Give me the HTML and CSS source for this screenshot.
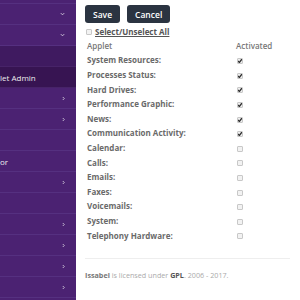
FILE: index.html
```html
<!DOCTYPE html>
<html lang="en">
<head>
  <meta charset="UTF-8">
  <title>Applet Admin</title>
  <meta name="viewport" content="width=device-width, initial-scale=1.0">
  <link rel="stylesheet" href="styles.css">
</head>
<body>
  <aside class="sidebar">
    <div class="nav-item top"></div>
    <div class="nav-item"><svg class="chev" viewBox="0 0 6 4"><polyline points="1,1 3,3 5,1"/></svg></div>
    <div class="nav-item"><svg class="chev" viewBox="0 0 6 4"><polyline points="1,1 3,3 5,1"/></svg></div>
    <div class="nav-item sub"></div>
    <div class="nav-item sub active"><span class="label">let Admin</span></div>
    <div class="nav-item"><svg class="chev right" viewBox="0 0 4 6"><polyline points="1,1 3,3 1,5"/></svg></div>
    <div class="nav-item"><svg class="chev right" viewBox="0 0 4 6"><polyline points="1,1 3,3 1,5"/></svg></div>
    <div class="nav-item"></div>
    <div class="nav-item"><span class="label">or</span></div>
    <div class="nav-item"><svg class="chev right" viewBox="0 0 4 6"><polyline points="1,1 3,3 1,5"/></svg></div>
    <div class="nav-item"></div>
    <div class="nav-item"><svg class="chev right" viewBox="0 0 4 6"><polyline points="1,1 3,3 1,5"/></svg></div>
    <div class="nav-item"><svg class="chev right" viewBox="0 0 4 6"><polyline points="1,1 3,3 1,5"/></svg></div>
    <div class="nav-item"><svg class="chev right" viewBox="0 0 4 6"><polyline points="1,1 3,3 1,5"/></svg></div>
    <div class="nav-item"><svg class="chev right" viewBox="0 0 4 6"><polyline points="1,1 3,3 1,5"/></svg></div>
  </aside>

  <main class="content">
    <div class="actions">
      <button type="button" class="btn">Save</button>
      <button type="button" class="btn">Cancel</button>
    </div>

    <label class="select-all"><input type="checkbox" class="box"><span>Select/Unselect All</span></label>

    <table class="applets">
      <thead>
        <tr><th>Applet</th><th>Activated</th></tr>
      </thead>
      <tbody>
        <tr><td>System Resources:</td><td><input type="checkbox" class="box" checked></td></tr>
        <tr><td>Processes Status:</td><td><input type="checkbox" class="box" checked></td></tr>
        <tr><td>Hard Drives:</td><td><input type="checkbox" class="box" checked></td></tr>
        <tr><td>Performance Graphic:</td><td><input type="checkbox" class="box" checked></td></tr>
        <tr><td>News:</td><td><input type="checkbox" class="box" checked></td></tr>
        <tr><td>Communication Activity:</td><td><input type="checkbox" class="box" checked></td></tr>
        <tr><td>Calendar:</td><td><input type="checkbox" class="box"></td></tr>
        <tr><td>Calls:</td><td><input type="checkbox" class="box"></td></tr>
        <tr><td>Emails:</td><td><input type="checkbox" class="box"></td></tr>
        <tr><td>Faxes:</td><td><input type="checkbox" class="box"></td></tr>
        <tr><td>Voicemails:</td><td><input type="checkbox" class="box"></td></tr>
        <tr><td>System:</td><td><input type="checkbox" class="box"></td></tr>
        <tr><td>Telephony Hardware:</td><td><input type="checkbox" class="box"></td></tr>
      </tbody>
    </table>

    <footer class="footer">
      <b>Issabel</b> is licensed under <b class="gpl">GPL</b>. 2006 - 2017.
    </footer>
  </main>
</body>
</html>
```

FILE: styles.css
```css
body {
  margin: 0;
  font-family: 'Open Sans', sans-serif;
  font-size: 8px;
  background: #fff;
  color: #666;
  display: flex;
  height: 300px;
  overflow: hidden;
}

.sidebar {
  width: 76px;
  flex-shrink: 0;
  background: #4b2272;
  overflow: hidden;
}

.nav-item {
  height: 20px;
  border-bottom: 1px solid #553080;
  display: flex;
  align-items: center;
  justify-content: flex-end;
  padding-right: 11px;
  color: #eee;
  white-space: nowrap;
}

.nav-item.top {
  height: 3px;
}

.nav-item .label {
  margin-right: auto;
}

.nav-item.sub {
  background: #3f1a60;
  border-bottom-color: #472368;
}

.nav-item.active {
  background: #371452;
}

.chev {
  width: 5px;
  height: 4px;
  fill: none;
  stroke: #cfc6da;
  stroke-width: 1.2;
}

.chev.right {
  width: 3px;
  height: 5px;
}

.content {
  flex: 1;
  padding: 5px 10px 0 9px;
}

.actions {
  display: flex;
  gap: 7px;
}

.btn {
  font-family: 'Open Sans', sans-serif;
  font-size: 8.5px;
  font-weight: 600;
  color: #fff;
  background: #2b3441;
  border: 0;
  border-radius: 3px;
  height: 18px;
  padding: 0 8px;
}

.box {
  appearance: none;
  -webkit-appearance: none;
  margin: 0;
  width: 6px;
  height: 6px;
  border: 1px solid #c8c8c8;
  border-radius: 1px;
  background: #f2f2f2;
  vertical-align: middle;
}

.box:checked {
  background: #eee url("data:image/svg+xml;utf8,<svg xmlns='http://www.w3.org/2000/svg' viewBox='0 0 6 6'><polyline points='1,3 2.4,4.5 5,1' fill='none' stroke='%23333' stroke-width='1.3'/></svg>") center/6px 6px no-repeat;
}

.select-all {
  display: flex;
  align-items: center;
  margin-top: 3px;
  height: 11px;
  font-weight: 700;
  color: #555;
}

.select-all .box {
  margin-left: 1px;
  margin-right: 3px;
}

.select-all span {
  text-decoration: underline;
}

.applets {
  border-collapse: collapse;
  width: 100%;
  margin-top: 1px;
}

.applets th,
.applets td {
  height: 14.6px;
  padding: 0 0 0 2px;
  text-align: left;
  font-weight: 700;
  color: #6a6a6a;
}

.applets th {
  font-weight: 600;
  color: #777;
}

.applets th:first-child,
.applets td:first-child {
  width: 147px;
}

.applets td:last-child {
  padding-left: 3px;
}

.footer {
  margin-top: 16px;
  border-top: 1px solid #eee;
  padding-top: 11px;
  color: #aaa;
  font-size: 7.2px;
}

.footer b {
  color: #777;
}

.footer .gpl {
  color: #555;
}
```
